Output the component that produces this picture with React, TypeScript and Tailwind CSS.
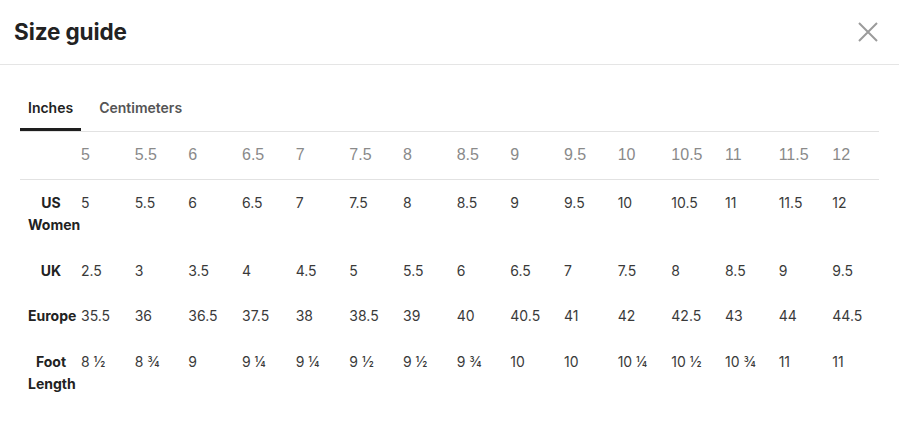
import React, { useState } from 'react';

const sizes = ['5', '5.5', '6', '6.5', '7', '7.5', '8', '8.5', '9', '9.5', '10', '10.5', '11', '11.5', '12'];

const rows: { label: string; values: string[] }[] = [
  { label: 'US Women', values: sizes },
  { label: 'UK', values: ['2.5', '3', '3.5', '4', '4.5', '5', '5.5', '6', '6.5', '7', '7.5', '8', '8.5', '9', '9.5'] },
  {
    label: 'Europe',
    values: ['35.5', '36', '36.5', '37.5', '38', '38.5', '39', '40', '40.5', '41', '42', '42.5', '43', '44', '44.5'],
  },
  {
    label: 'Foot Length',
    values: ['8 ½', '8 ¾', '9', '9 ¼', '9 ¼', '9 ½', '9 ½', '9 ¾', '10', '10', '10 ¼', '10 ½', '10 ¾', '11', '11'],
  },
];

const App: React.FC = () => {
  const [tab, setTab] = useState<'in' | 'cm'>('in');

  return (
    <div className="min-h-screen w-full bg-white text-[#222] font-['Inter',sans-serif]">
      {/* header */}
      <div className="flex items-center justify-between border-b border-[#e5e5e5] pl-[14px] pr-[21px] pt-[18px] pb-[18px]">
        <h1 className="text-[22.5px] leading-[28px] font-bold tracking-[-0.1px]">Size guide</h1>
        <button aria-label="Close" className="text-[#9b9b9b]">
          <svg width="20" height="20" viewBox="0 0 20 20" fill="none" stroke="currentColor" strokeWidth="2">
            <path d="M1 1 19 19M19 1 1 19" />
          </svg>
        </button>
      </div>

      <div className="px-5 pt-[33px]">
        {/* tabs */}
        <div className="flex border-b border-[#e2e2e2]">
          <button
            onClick={() => setTab('in')}
            className={`px-2 pb-[10px] text-[14px] leading-[20px] font-semibold border-b-[3px] ${
              tab === 'in' ? 'border-[#1e1e1e] text-[#222]' : 'border-transparent text-[#555]'
            }`}
          >
            Inches
          </button>
          <button
            onClick={() => setTab('cm')}
            className={`ml-[10px] px-2 pb-[10px] text-[14px] leading-[20px] font-semibold border-b-[3px] ${
              tab === 'cm' ? 'border-[#1e1e1e] text-[#222]' : 'border-transparent text-[#555]'
            }`}
          >
            Centimeters
          </button>
        </div>

        {/* table */}
        <div className="grid grid-cols-[54px_repeat(15,minmax(0,1fr))]">
          <div className="border-b border-[#e2e2e2]" />
          {sizes.map((s, i) => (
            <div
              key={i}
              className="border-b border-[#e2e2e2] pl-[7px] pt-[12px] pb-[13px] text-[16px] leading-[22px] text-[#8a8a8a] font-['Liberation_Sans',Arial,sans-serif]"
            >
              {s}
            </div>
          ))}

          {rows.map(row => (
            <React.Fragment key={row.label}>
              <div className="pl-2 pt-[12px] pb-[11.5px] text-center text-[14px] leading-[22px] font-bold text-[#222]">
                {row.label}
              </div>
              {row.values.map((v, i) => (
                <div key={i} className="pl-[7px] pt-[12px] pb-[11.5px] text-[14px] leading-[22px] text-[#3a3a3a]">
                  {v}
                </div>
              ))}
            </React.Fragment>
          ))}
        </div>
      </div>
    </div>
  );
};

export default App;
